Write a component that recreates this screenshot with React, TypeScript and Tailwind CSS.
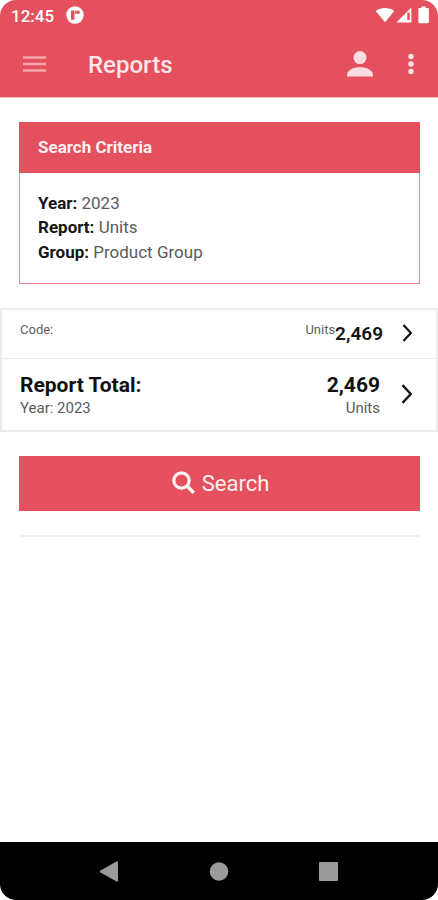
import type { ReactNode } from 'react';

const criteria = [
    { label: 'Year:', value: '2023' },
    { label: 'Report:', value: 'Units' },
    { label: 'Group:', value: 'Product Group' }
];

function StatusBar() {
    return (
        <div className="flex h-8 items-center pl-[11px] pr-[8px] text-white">
            <span className="text-[17px] leading-[31px] font-medium">12:45</span>
            <svg className="-mt-[2px] ml-[12px] h-[18px] w-[18px]" viewBox="0 0 18 18">
                <circle cx="9" cy="9" r="8.700" fill="#fff" />
                <path d="M5 4.400h3.400v9.400H5z" fill="#e5505e" />
                <path d="M9.200 4.400h1.200v3.600H9.200z" fill="#e5505e" />
                <circle cx="12" cy="6.200" r="1.800" fill="#e5505e" />
            </svg>
            <div className="-mt-[2px] ml-auto flex items-center">
                <svg className="h-4 w-[20px]" viewBox="0 0 20 16">
                    <path d="M.7 3.900C6 .1 14 .1 19.300 3.900L10 15.200z" fill="#fff" />
                </svg>
                <svg className="ml-[1px] h-4 w-4" viewBox="0 0 16 16">
                    <path d="M15.400.4v15H.4z" fill="#fff" />
                    <path d="M11.300 5.500h2.400v7.500h-2.400z" fill="#e5505e" />
                </svg>
                <svg className="ml-[6px] h-[18px] w-3" viewBox="0 0 12 18">
                    <path
                        d="M3.400 2V.6h4.400V2h1.900c.7 0 1.200.5 1.200 1.200v12.900c0 .7-.5 1.200-1.200 1.200H1.600c-.7 0-1.200-.5-1.200-1.200V3.200C.4 2.500.9 2 1.600 2z"
                        fill="#fff"
                    />
                </svg>
            </div>
        </div>
    );
}

function AppBar() {
    return (
        <div className="flex h-[65px] items-center pl-[23px] pr-[24px]">
            <svg className="-mt-[2px] h-[18px] w-[23px]" viewBox="0 0 23 18">
                <path d="M0 2.500h23M0 9h23M0 15.500h23" stroke="#f5a5ac" strokeWidth="2.500" />
            </svg>
            <h1 className="ml-[42px] text-[24px] leading-8 font-medium text-[#ffe6e8]">Reports</h1>
            <svg className="-mt-[2px] ml-auto h-[26px] w-[26px]" viewBox="0 0 26 26">
                <circle cx="13" cy="6.600" r="6.500" fill="#fddde0" />
                <path d="M0 25.400v-1.700C0 19.500 6.600 15.900 13 15.900s13 3.600 13 7.800v1.700z" fill="#fddde0" />
            </svg>
            <svg className="-mt-[2px] ml-[35px] h-[22px] w-[6px]" viewBox="0 0 6 22">
                <circle cx="3" cy="3.500" r="2.700" fill="#fee3e5" />
                <circle cx="3" cy="11" r="2.700" fill="#fee3e5" />
                <circle cx="3" cy="18.500" r="2.700" fill="#fee3e5" />
            </svg>
        </div>
    );
}

function Chevron({ className }: { className: string }) {
    return (
        <svg className={className} viewBox="0 0 10 17" fill="none">
            <path d="M1.200 1l7 7.500L1.200 16" stroke="#111" strokeWidth="2" />
        </svg>
    );
}

function Row({ className, children }: { className: string; children: ReactNode }) {
    return <div className={`flex border-[#ececec] pl-[18px] ${className}`}>{children}</div>;
}

export default function App() {
    return (
        <div className="h-[900px] w-[438px] overflow-hidden bg-white font-[Roboto,sans-serif]">
            <div className="flex h-full flex-col overflow-hidden rounded-[16px] bg-white">
                <header className="h-[98px] shrink-0 border-b border-[#f3b9be] bg-[#e5505e]">
                    <StatusBar />
                    <AppBar />
                </header>

                <main className="flex-1">
                    <section className="mt-6 ml-[19px] h-[162px] w-[401px] border border-[#ea8792]">
                        <h2 className="-mx-px -mt-px h-[51px] bg-[#e5505e] pl-[19px] text-[17px] leading-[51px] font-bold text-[#fff0f1]">
                            Search Criteria
                        </h2>
                        <div className="pt-[18px] pl-[18px] text-[17px] leading-[24.300px] text-[#5a5a5a]">
                            {criteria.map((item) => (
                                <p key={item.label}>
                                    <b className="font-bold text-[#161616]">{item.label}</b> {item.value}
                                </p>
                            ))}
                        </div>
                    </section>

                    <section className="mt-6 h-[124px] border-2 border-[#ececec]">
                        <Row className="h-[49px] border-b">
                            <span className="mt-[12px] text-[13px] leading-4 text-[#606060]">Code:</span>
                            <span className="mt-[12px] ml-auto text-[13px] leading-4 text-[#606060]">
                                Units
                            </span>
                            <span className="mt-[12px] text-[19px] leading-6 font-semibold text-[#151515]">
                                2,469
                            </span>
                            <Chevron className="mt-[14px] mr-[23px] ml-[19px] h-[18px] w-[11px]" />
                        </Row>
                        <Row className="h-[71px]">
                            <div>
                                <p className="mt-[14px] text-[21px] leading-6 font-bold text-[#111]">
                                    Report Total:
                                </p>
                                <p className="text-[15px] leading-[22px] text-[#5a5a5a]">Year: 2023</p>
                            </div>
                            <div className="ml-auto text-right">
                                <p className="mt-[14px] text-[21px] leading-6 font-bold text-[#111]">2,469</p>
                                <p className="text-[15px] leading-[22px] text-[#5a5a5a]">Units</p>
                            </div>
                            <Chevron className="mt-[25px] mr-[23px] ml-[21px] h-[20px] w-[12px]" />
                        </Row>
                    </section>

                    <button className="mt-6 ml-[19px] flex h-[55px] w-[401px] items-center justify-center bg-[#e5505e] text-[22px] text-[#fff0f1]">
                        <svg className="-mt-[2px] mr-[7px] ml-[2px] h-[23px] w-[23px]" viewBox="0 0 23 23" fill="none">
                            <circle cx="9.500" cy="9.500" r="7.700" stroke="#fff5f5" strokeWidth="3.200" />
                            <path d="M14.800 14.800l7 7" stroke="#fff5f5" strokeWidth="3.600" />
                        </svg>
                        Search
                    </button>
                    <hr className="mt-6 ml-5 w-[400px] border-t-2 border-[#efefef]" />
                </main>

                <nav className="h-[58px] shrink-0 bg-black">
                    <svg className="h-[58px] w-[438px]" viewBox="0 0 438 58" fill="#9b9b9b">
                        <path d="M100.500 28.500Q99 29.500 100.500 30.500L116.500 39.500Q118 40 118 38.500V20.500Q118 19 116.500 19.500z" />
                        <circle cx="219" cy="29.500" r="9.300" />
                        <rect x="319" y="20" width="19" height="19" rx="1" />
                    </svg>
                </nav>
            </div>
        </div>
    );
}
